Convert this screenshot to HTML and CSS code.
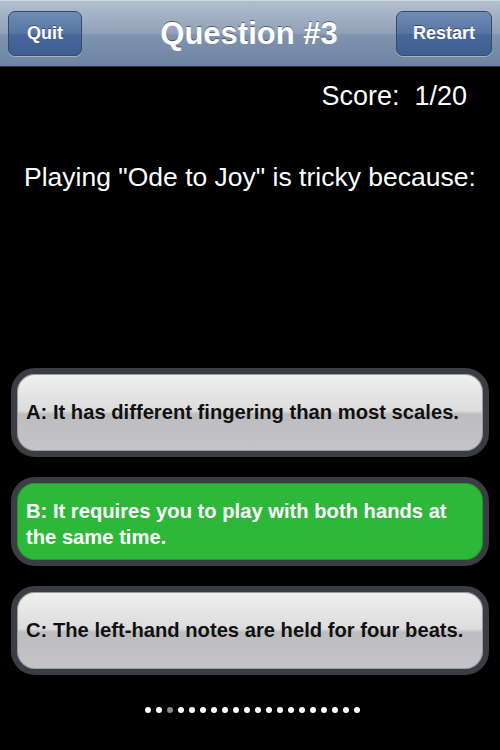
FILE: index.html
```html
<!DOCTYPE html>
<html>
<head>
<meta charset="utf-8">
<link rel="stylesheet" href="styles.css">
</head>
<body>
<div class="screen">
  <div class="navbar">
    <div class="navbtn">Quit</div>
    <div class="title">Question #3</div>
    <div class="navbtn">Restart</div>
  </div>
  <div class="score">Score:  1/20</div>
  <div class="question">Playing "Ode to Joy" is tricky because:</div>
  <div class="answers">
    <div class="answer">A: It has different fingering than most scales.</div>
    <div class="answer correct">B: It requires you to play with both hands at the same time.</div>
    <div class="answer">C: The left-hand notes are held for four beats.</div>
  </div>
  <div class="dots">
    <span class="dot"></span><span class="dot"></span><span class="dot dim"></span><span class="dot"></span><span class="dot"></span><span class="dot"></span><span class="dot"></span><span class="dot"></span><span class="dot"></span><span class="dot"></span><span class="dot"></span><span class="dot"></span><span class="dot"></span><span class="dot"></span><span class="dot"></span><span class="dot"></span><span class="dot"></span><span class="dot"></span><span class="dot"></span><span class="dot"></span>
  </div>
</div>
</body>
</html>
```
FILE: styles.css
```css
html, body {
  margin: 0;
  padding: 0;
  background: #000;
}
.screen {
  width: 500px;
  height: 750px;
  display: flex;
  flex-direction: column;
  font-family: "Liberation Sans", Arial, sans-serif;
  color: #fff;
}
.navbar {
  height: 67px;
  border-bottom: 1px solid #2d3642;
  background: linear-gradient(#b3bfcf 0%, #8fa0b8 50%, #7f93ae 52%, #6d84a2 100%);
  border-top: 1px solid #cdd5e0;
  display: flex;
  align-items: center;
  justify-content: space-between;
  padding: 0 8px;
  box-sizing: border-box;
}
.navbtn {
  height: 45px;
  border: 1px solid #34496b;
  border-radius: 7px;
  background: linear-gradient(#6f8cb6 0%, #5675a3 50%, #48679a 51%, #3f5e92 100%);
  box-shadow: 0 1px 0 rgba(255,255,255,0.35);
  display: flex;
  align-items: center;
  justify-content: center;
  font-weight: bold;
  font-size: 18px;
  color: #fff;
  text-shadow: 0 -1px 0 rgba(0,0,0,0.4);
  box-sizing: border-box;
}
.navbtn:first-child {
  width: 74px;
}
.navbtn:last-child {
  width: 96px;
}
.title {
  font-weight: bold;
  font-size: 31px;
  color: #fff;
  text-shadow: 0 -1px 0 rgba(0,0,0,0.45);
  margin-left: 20px;
}
.score {
  white-space: pre;
  text-align: right;
  font-size: 27px;
  padding-right: 33px;
  margin-top: 14px;
  line-height: 30px;
}
.question {
  font-size: 26.5px;
  padding-left: 24px;
  margin-top: 51px;
  line-height: 30px;
}
.answers {
  margin-top: 176px;
  display: flex;
  flex-direction: column;
  gap: 20px;
  padding: 0 11px;
}
.answer {
  height: 89px;
  box-sizing: border-box;
  border: 6px solid #3a3d43;
  border-radius: 24px;
  background: linear-gradient(#f0f0f0 0%, #dcdcdc 48%, #bdbdbf 52%, #c5c5c7 100%);
  box-shadow: inset 0 0 0 1px #9a9ca0;
  color: #111;
  font-weight: bold;
  font-size: 20.2px;
  line-height: 26px;
  padding: 0 14px 2px 9px;
  display: flex;
  align-items: center;
}
.answer.correct {
  background: #2db83a;
  box-shadow: inset 0 0 0 1px #239a2e;
  color: #fff;
  align-items: flex-start;
  padding-top: 15px;
}
.dots {
  margin-top: 32px;
  display: flex;
  justify-content: center;
  gap: 5px;
  padding-left: 4px;
}
.dot {
  width: 6px;
  height: 6px;
  border-radius: 50%;
  background: #fff;
}
.dot.dim {
  background: #8a8a8a;
}
```
